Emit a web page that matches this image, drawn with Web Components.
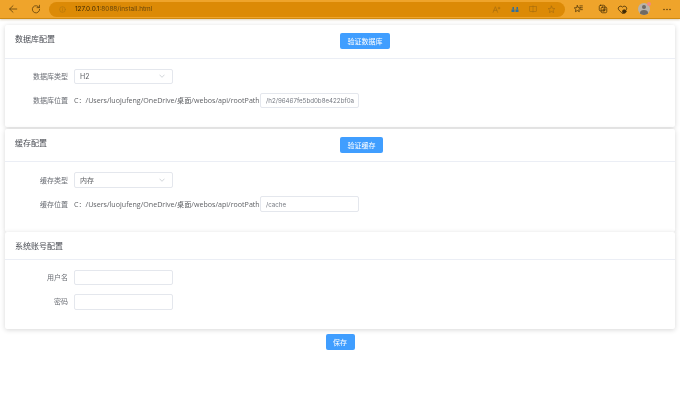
<!DOCTYPE html>
<html lang="zh"><head><meta charset="utf-8"><title>install</title>
<style>
html,body{margin:0;padding:0;background:#fff;height:100%;overflow:hidden}
body{font-family:"Inter","Noto Sans CJK SC",sans-serif;color:#606266;filter:blur(.3px)}
</style></head><body>
<browser-bar url-host="127.0.0.1" url-rest=":8088/install.html"></browser-bar>
<install-page>
  <config-card title="数据库配置" action="验证数据库" style="--head:33.5px;--bottom:18.500px;--gap:2px">
    <form-row label="数据库类型"><fake-select value="H2"></fake-select></form-row>
    <form-row label="数据库位置"><path-prefix>C：/Users/luojufeng/OneDrive/桌面/webos/api/rootPath</path-prefix><text-box value="/h2/96467fe5bd0b8e422bf0a"></text-box></form-row>
  </config-card>
  <config-card title="缓存配置" action="验证缓存" style="--head:33.5px;--bottom:19.500px;--gap:.7px">
    <form-row label="缓存类型"><fake-select value="内存"></fake-select></form-row>
    <form-row label="缓存位置"><path-prefix>C：/Users/luojufeng/OneDrive/桌面/webos/api/rootPath</path-prefix><text-box value="/cache"></text-box></form-row>
  </config-card>
  <config-card title="系统账号配置" style="--head:27.600px;--bottom:19px;--gap:0">
    <form-row label="用户名"><text-box></text-box></form-row>
    <form-row label="密码"><text-box></text-box></form-row>
  </config-card>
  <page-footer><blue-button>保存</blue-button></page-footer>
</install-page>
<script>
function def(name, css, html){
  customElements.define(name, class extends HTMLElement{
    connectedCallback(){
      if(this.shadowRoot) return;
      const r=this.attachShadow({mode:'open'});
      r.innerHTML='<style>'+css+'</style>'+(typeof html==='function'?html(this):html);
    }
  });
}
const ic=(w,inner,st)=>`<svg style="${st||''}" width="${w}" height="${w}" viewBox="0 0 16 16" fill="none" stroke="currentColor" stroke-width="1.100" stroke-linecap="round" stroke-linejoin="round">${inner}</svg>`;
def('browser-bar',`
:host{display:flex;align-items:center;height:18px;background:#efa42b;border-bottom:1px solid #d08a12;box-shadow:0 1px 2px rgba(120,80,0,.25);position:relative;color:#4a3208}
.nav{display:flex;align-items:center;width:49px;flex:none;padding-left:8px;box-sizing:border-box}
.pill{flex:none;width:516px;height:15px;border-radius:8px;background:#dc8a06;display:flex;align-items:center;box-sizing:border-box;padding:0 9px 0 10px;font:6.450px "Inter",sans-serif}
.info{margin-right:9px;display:flex;color:#a87110}
.host{color:#3c2804}.rest{color:#6a470c}
.sp{flex:1}
.r{display:flex;gap:10px;align-items:center;color:#a06a10}
.r svg,.tools svg{display:block;flex:none}
.tools{flex:1;display:flex;align-items:center;color:#3f2a05}
.ava{width:12px;height:12px;border-radius:50%;background:#b9b3aa;position:relative;overflow:hidden;display:block}
.ava:before{content:"";position:absolute;left:4px;top:2px;width:4px;height:4px;border-radius:50%;background:#6f6a64}
.ava:after{content:"";position:absolute;left:2px;top:7px;width:8px;height:6px;border-radius:50%;background:#6f6a64}
.avw{position:relative;display:flex;margin-left:10px}
.dot{position:absolute;right:-1px;top:-1px;width:4px;height:4px;border-radius:50%;background:#f08a80;z-index:1}
`,h=>`<div class="nav">${ic(10,'<path d="M14 8H3M8 2.800 2.500 8 8 13.200"/>')}${ic(10,'<path d="M13 5.500A5.800 5.800 0 1 0 13.800 8.500"/><path d="M13.500 2v3.800H9.700"/>','margin-left:13px')}</div>
<div class="pill"><span class="info">${ic(7,'<circle cx="8" cy="8" r="6.500"/><path d="M8 7.500v3.500M8 5v.4"/>')}</span><span class="host">${h.getAttribute('url-host')}</span><span class="rest">${h.getAttribute('url-rest')}</span><span class="sp"></span>
<span class="r">${ic(9,'<path d="M2 13 6 3l4 10M3.500 9.500h5M11 5.500h3M12.500 4v3"/>')}<svg width="8" height="7" viewBox="0 0 16 14" fill="#2f6f9f"><rect x="1" y="7" width="6" height="5"/><rect x="9" y="7" width="6" height="5"/><rect x="3" y="2" width="3" height="5"/><rect x="11" y="2" width="3" height="5"/></svg><svg width="8" height="8" viewBox="0 0 16 16" fill="none" stroke="currentColor" stroke-width="1.100"><rect x="1.500" y="3" width="13" height="10"/><path d="M8 1v14"/></svg>${ic(9,'<path d="M8 2l1.800 3.900 4.200.5-3.100 2.900.8 4.200L8 11.400 4.300 13.500l.8-4.200L2 6.400l4.200-.5z"/>')}</span></div>
<div class="tools">${ic(10,'<path d="M7 2.500l1.500 3.300 3.600.4-2.700 2.500.7 3.600L7 10.500 3.900 12.300l.7-3.600L2 6.200l3.600-.4z"/><path d="M11 3h4M12 6h3M12 9h3"/>','margin-left:8px')}${ic(10,'<rect x="2" y="2" width="9" height="9" rx="2"/><rect x="5" y="5" width="9" height="9" rx="2"/><path d="M9.500 7.500v4M7.500 9.500h4"/>','margin-left:15px')}${ic(11,'<path d="M8 14 2.500 8.500A3.300 3.300 0 0 1 8 4.500a3.300 3.300 0 0 1 5.500 4z"/><circle cx="10.500" cy="11" r="2.600" fill="currentColor"/>','margin-left:9px')}<span class="avw"><span class="ava"></span><span class="dot"></span></span><svg style="margin-left:13px" width="8" height="3" viewBox="0 0 8 3" fill="currentColor"><circle cx="1" cy="1.500" r=".7"/><circle cx="4" cy="1.500" r=".7"/><circle cx="7" cy="1.500" r=".7"/></svg></div>`);
def('install-page',`
:host{display:flex;flex-direction:column;padding:6px 5px 0 5px;align-items:stretch}
`,`<slot></slot>`);
def('page-footer',`
:host{display:flex;justify-content:center;margin-top:5px}
`,`<slot></slot>`);
def('config-card',`
:host{display:block;background:#fff;border-radius:2px;box-shadow:0 1px 5px rgba(0,0,0,.16);margin-bottom:var(--gap,1px)}
.h{height:var(--head);box-sizing:border-box;border-bottom:1px solid #ebeef5;display:grid;grid-template-columns:325px 1fr;padding-left:10px;color:#484b52;font:8px/1 "Noto Sans CJK SC",sans-serif}
.t{padding-top:10px;height:10px}
.a{padding-top:8px}
.b{padding:10px 0 var(--bottom) 0;display:flex;flex-direction:column;gap:8.600px}
`,h=>`<div class="h"><div class="t">${h.getAttribute('title')}</div><div class="a">${h.getAttribute('action')?`<blue-button>${h.getAttribute('action')}</blue-button>`:''}</div></div><div class="b"><slot></slot></div>`);
def('form-row',`
:host{display:flex;align-items:center;height:15.600px}
.l{flex:none;text-align:right;font:7px/15px "Noto Sans CJK SC",sans-serif;color:#6c6f76;white-space:nowrap;margin-right:6px;width:63px}
`,h=>`<div class="l">${h.getAttribute('label')}</div><slot></slot>`);
def('fake-select',`
:host{display:flex;align-items:center;justify-content:space-between;box-sizing:border-box;width:98.500px;height:15.600px;border:1px solid #e4e7ed;border-radius:2px;padding:0 7px 0 5px;font:7px "Inter","Noto Sans CJK SC",sans-serif;color:#606266;background:#fff}
svg{display:block}
`,h=>`<span>${h.getAttribute('value')}</span><svg width="6" height="4" viewBox="0 0 6 4" fill="none" stroke="#c0c4cc" stroke-width=".7"><path d="M.5.7 3 3.300 5.500.7"/></svg>`);
def('path-prefix',`
:host{display:block;width:186px;flex:none;font:7.100px/15px "Open Sans","Noto Sans CJK SC",sans-serif;color:#606266;white-space:nowrap}
`,`<slot></slot>`);
def('text-box',`
:host{display:flex;align-items:center;box-sizing:border-box;width:98.500px;height:15.600px;border:1px solid #e4e7ed;border-radius:2px;padding:0 5px;font:6.200px "Inter",sans-serif;color:#767a82;background:#fff;overflow:hidden;white-space:nowrap}
`,h=>`<span>${h.getAttribute('value')||''}</span>`);
def('blue-button',`
:host{display:inline-block;box-sizing:border-box;height:16px;padding:0 7.500px;border-radius:2px;background:#409eff;color:#fff;font:7px/16px "Noto Sans CJK SC",sans-serif;text-align:center;white-space:nowrap}
`,`<slot></slot>`);
</script>
</body></html>
